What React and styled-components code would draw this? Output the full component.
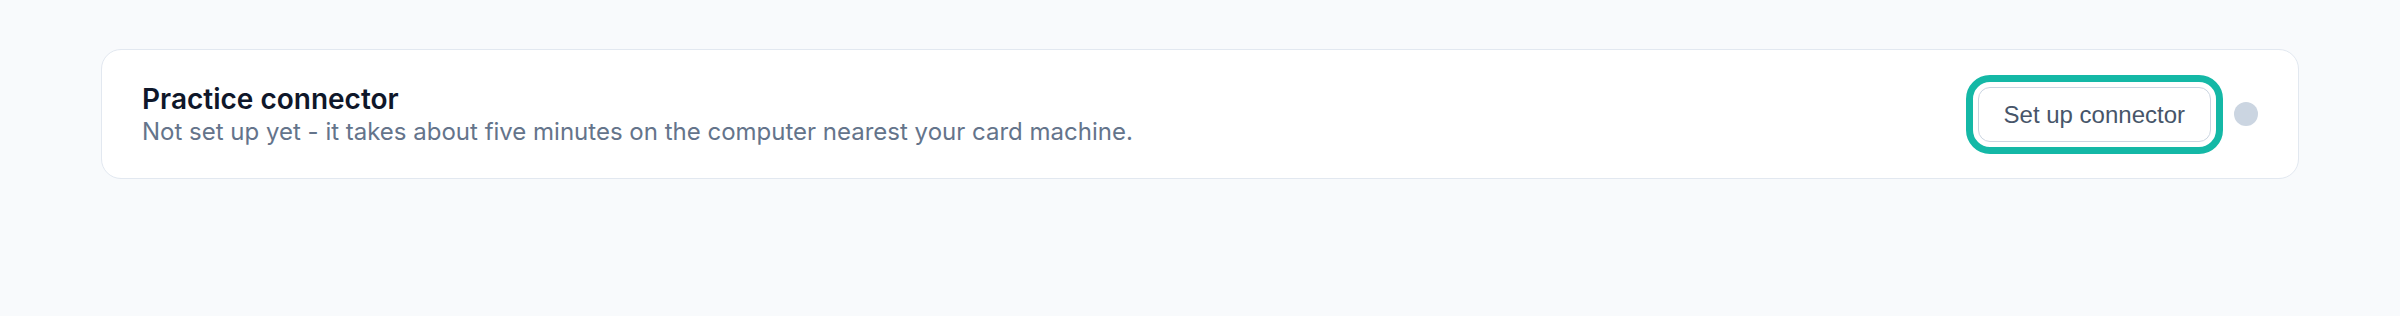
import React from 'react'
import styled, { createGlobalStyle } from 'styled-components'

const GlobalStyle = createGlobalStyle`
    body{
        margin: 0;
        background: #f8fafc;
        font-family: Inter, "Noto Sans", sans-serif;
    }
`;

function App() {
    return (
        <>
            <GlobalStyle />
            <PageStyled>
                <CardStyled>
                    <div className="info">
                        <h3>Practice connector</h3>
                        <p>Not set up yet - it takes about five minutes on the computer nearest your card machine.</p>
                    </div>
                    <div className="actions">
                        <SetupButton type="button">Set up connector</SetupButton>
                        <StatusDot />
                    </div>
                </CardStyled>
            </PageStyled>
        </>
    )
}

const PageStyled = styled.main`
    padding: 49px 101px;
`;

const CardStyled = styled.section`
    display: flex;
    align-items: center;
    justify-content: space-between;
    background: #fff;
    border: 1px solid #e2e8f0;
    border-radius: 20px;
    padding: 32px 40px;
    .info{
        h3{
            margin: 0;
            font-size: 28px;
            line-height: 34px;
            font-weight: 600;
            color: #0f172a;
        }
        p{
            margin: 2px 0 0;
            font-size: 24px;
            line-height: 28px;
            color: #64748b;
        }
    }
    .actions{
        display: flex;
        align-items: center;
        gap: 23px;
    }
`;

const SetupButton = styled.button`
    font-family: "Liberation Sans", Arial, sans-serif;
    font-size: 24px;
    line-height: 29px;
    color: #475569;
    background: #fff;
    border: 1px solid #cbd5e1;
    border-radius: 12px;
    padding: 12px 25px;
    outline: 7px solid #14b8a6;
    outline-offset: 5px;
    cursor: pointer;
`;

const StatusDot = styled.span`
    width: 24px;
    height: 24px;
    border-radius: 50%;
    background: #cbd5e1;
`;

export default App
